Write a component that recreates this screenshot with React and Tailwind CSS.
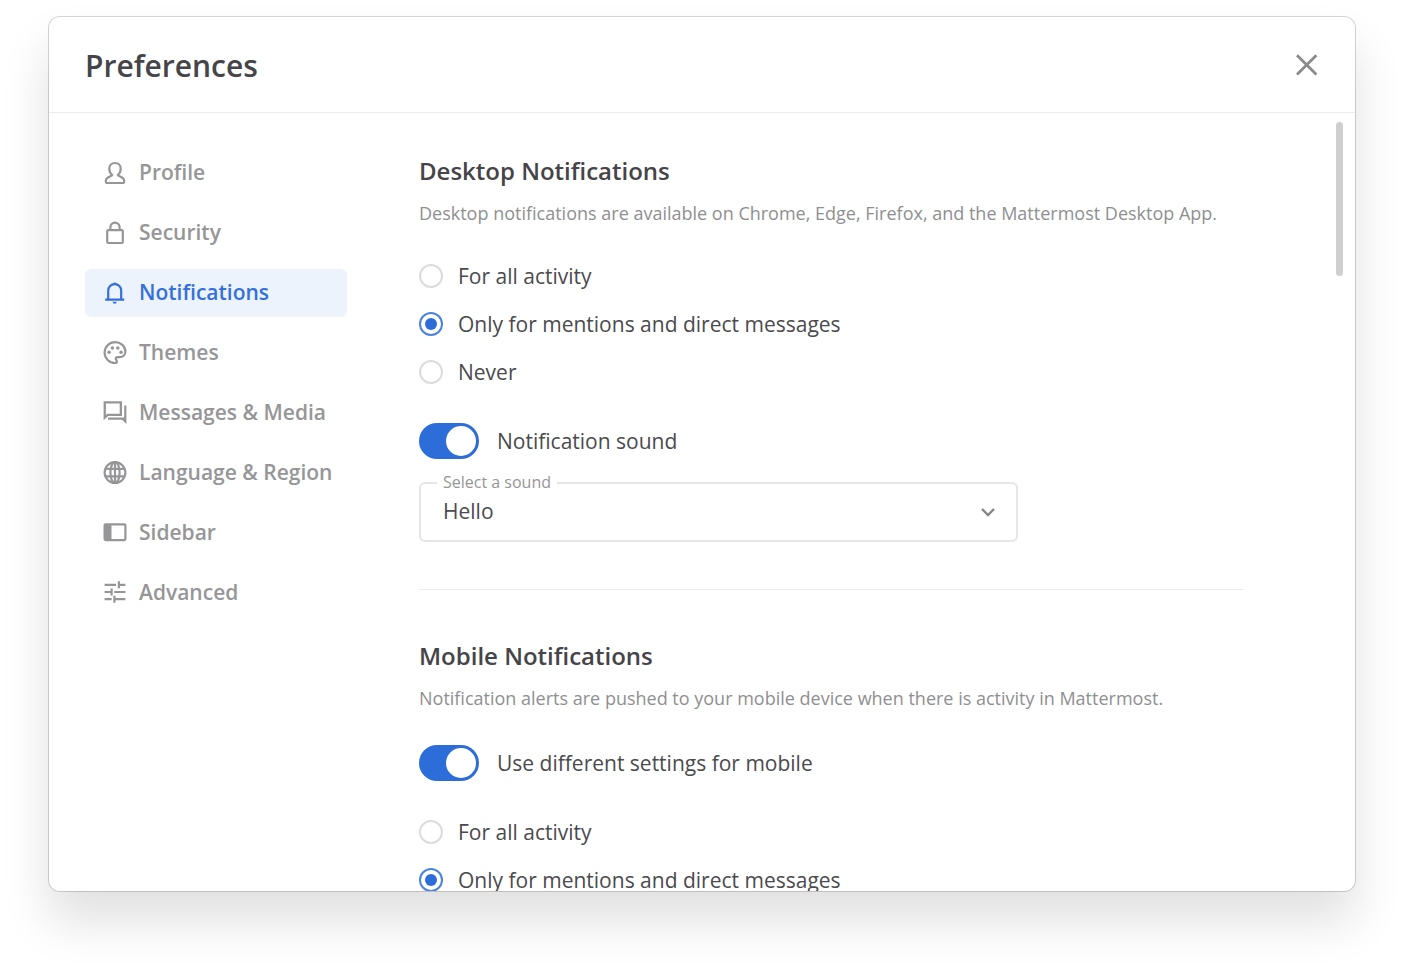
import { useState } from "react";

const stroke = {
  fill: "none",
  stroke: "currentColor",
  strokeWidth: 2.2,
  strokeLinejoin: "round",
};

function Icon({ children }) {
  return (
    <svg viewBox="0 0 24 24" className="size-6 shrink-0" aria-hidden="true">
      {children}
    </svg>
  );
}

const ProfileIcon = () => (
  <Icon>
    <path
      {...stroke}
      d="M12 2C8.700 2 6.300 4.200 6.300 7.700C6.300 10.600 7.600 12.600 9.200 14C8.500 15.600 2.900 15.700 2.900 19.300V20.400C2.900 21.300 3.500 22 4.400 22H19.600C20.500 22 21.100 21.300 21.100 20.400V19.300C21.100 15.700 15.500 15.600 14.800 14C16.400 12.600 17.700 10.600 17.700 7.700C17.700 4.200 15.300 2 12 2Z"
    />
  </Icon>
);

const LockIcon = () => (
  <Icon>
    <rect {...stroke} x="4.200" y="9.200" width="15.600" height="12.800" rx="1" />
    <path {...stroke} d="M7.400 9.200V6.200C7.400 3.600 9.400 1.600 12 1.600S16.600 3.600 16.600 6.200V9.200" />
  </Icon>
);

const BellIcon = () => (
  <Icon>
    <path {...stroke} d="M2.200 18.600H21.200M5.200 18.600V9.800C5.200 6 8 3.200 11.700 3.200S18.200 6 18.200 9.800V18.600" />
    <path fill="currentColor" d="M9.900 2.900a1.900 1.900 0 0 1 3.600 0zM9.600 20.700h4.200a2.100 2.100 0 0 1-4.200 0z" />
  </Icon>
);

const PaletteIcon = () => (
  <Icon>
    <path
      {...stroke}
      d="M12 22C6.200 22 1.600 17.300 1.600 11.600S6.200 1.200 12 1.200S22.400 5.300 22.400 10.600C22.400 13.900 19.700 16.100 16.700 16.100H14.700C13.500 16.100 12.800 16.900 12.800 17.800C12.800 18.900 13.900 19.200 13.900 20.500C13.900 21.400 13.100 22 12 22Z"
    />
    <g fill="currentColor">
      <circle cx="6.100" cy="11.300" r="1.800" />
      <circle cx="9.400" cy="7" r="1.800" />
      <circle cx="14.800" cy="7" r="1.800" />
      <circle cx="18.100" cy="11.300" r="1.800" />
    </g>
  </Icon>
);

const MessagesIcon = () => (
  <Icon>
    <path
      fill="currentColor"
      fillRule="evenodd"
      d="M.600 .300H19V14.900H5.200L.600 19.200ZM2.900 2.600V14L4.300 12.700H16.700V2.600Z"
    />
    <path fill="currentColor" d="M21.200 4.500H23.400V23L19 18.800H5V16.600H21.200Z" />
  </Icon>
);

const GlobeIcon = () => (
  <Icon>
    <g {...stroke}>
      <circle cx="12" cy="11.600" r="10.400" />
      <ellipse cx="12" cy="11.600" rx="4.600" ry="10.400" />
      <path d="M2.300 7.900H21.700M2.300 15.300H21.700M12 1.200V22" />
    </g>
  </Icon>
);

const SidebarIcon = () => (
  <Icon>
    <rect {...stroke} x="1.600" y="3.300" width="20.800" height="15.800" rx="1" />
    <path fill="currentColor" d="M1.600 3.300H8.500V19.100H1.600Z" />
  </Icon>
);

const TuneIcon = () => (
  <Icon>
    <path
      {...stroke}
      strokeLinejoin="miter"
      d="M1.600 3.800H13M15.900 .300V7.300M15.900 3.800H22.400M1.600 11H8.600M8.600 7.500V14.500M11.200 11H22.400M1.600 18.200H8.600M11.400 14.700V21.700M11.400 18.200H22.400"
    />
  </Icon>
);

const NAV = [
  ["Profile", ProfileIcon],
  ["Security", LockIcon],
  ["Notifications", BellIcon],
  ["Themes", PaletteIcon],
  ["Messages & Media", MessagesIcon],
  ["Language & Region", GlobeIcon],
  ["Sidebar", SidebarIcon],
  ["Advanced", TuneIcon],
];

const ACTIVITY = ["For all activity", "Only for mentions and direct messages", "Never"];

function RadioGroup({ name, label }) {
  return (
    <div role="radiogroup" aria-label={label} className="flex flex-col items-start gap-6">
      {ACTIVITY.map((option, i) => (
        <label key={option} className="flex cursor-pointer items-center gap-[15px] leading-6">
          <input
            type="radio"
            name={name}
            defaultChecked={i === 1}
            className="grid size-6 shrink-0 appearance-none place-content-center rounded-full border-2 border-[#dcdcdd] before:size-3 before:rounded-full checked:border-[#4a83e2] checked:before:bg-[#2d6dda]"
          />
          {option}
        </label>
      ))}
    </div>
  );
}

function Toggle({ label }) {
  return (
    <label className="flex cursor-pointer items-center gap-[18px] self-start leading-6">
      <input
        type="checkbox"
        role="switch"
        defaultChecked
        className="flex h-9 w-[60px] shrink-0 appearance-none items-center rounded-full bg-[#b8b8b9] px-[3px] before:size-[30px] before:rounded-full before:bg-white checked:justify-end checked:bg-[#2d6dda]"
      />
      {label}
    </label>
  );
}

function SectionHeading({ title, children }) {
  return (
    <>
      <h2 className="text-2xl leading-8 font-semibold text-[#454449]">{title}</h2>
      <p className="mt-3 text-lg leading-7 text-[#8f8f91]">{children}</p>
    </>
  );
}

export default function App() {
  const [active, setActive] = useState("Notifications");

  return (
    <div className="flex h-screen flex-col bg-white px-12 pt-4 pb-[78px] font-['Open_Sans',sans-serif] text-[21px] text-[#4b4a4e]">
      <div
        role="dialog"
        aria-labelledby="dialog-title"
        className="mr-[-2px] flex min-h-0 flex-1 flex-col overflow-hidden rounded-xl border border-black/16 bg-white bg-clip-padding shadow-[0_30px_48px_rgba(0,0,0,0.12)]"
      >
        <header className="flex h-24 shrink-0 items-center justify-between border-b border-[#ececec] px-9">
          <h1 id="dialog-title" className="pt-0.5 text-3xl font-semibold text-[#454449]">
            Preferences
          </h1>
          <button type="button" aria-label="Close" className="text-[#8b8b8d]">
            <svg viewBox="0 0 24 24" className="size-6" aria-hidden="true">
              <path d="M2 2.200L21.400 21.600M21.400 2.200L2 21.600" fill="none" stroke="currentColor" strokeWidth="2.800" />
            </svg>
          </button>
        </header>

        <div className="flex min-h-0 flex-1">
          <nav aria-label="Preferences" className="flex w-[298px] shrink-0 flex-col gap-3 pt-9 pl-9">
            {NAV.map(([name, NavIcon]) => (
              <button
                key={name}
                type="button"
                onClick={() => setActive(name)}
                aria-current={active === name ? "page" : undefined}
                className={`flex h-12 shrink-0 items-center gap-3 rounded-md pl-[18px] font-semibold whitespace-nowrap ${
                  active === name ? "bg-[#ecf3fc] text-[#3470db]" : "text-[#969698]"
                }`}
              >
                <NavIcon />
                {name}
              </button>
            ))}
          </nav>

          <main className="min-w-0 flex-1 overflow-y-auto pr-[92px] pl-[72px] [scrollbar-width:none]">
            <section className="flex flex-col border-b border-[#ececec] pt-[42px] pb-[47px]">
              <SectionHeading title="Desktop Notifications">
                Desktop notifications are available on Chrome, Edge, Firefox, and the Mattermost Desktop App.
              </SectionHeading>
              <div className="mt-[37px] mb-[39px]">
                <RadioGroup name="desktop" label="Desktop notifications" />
              </div>
              <Toggle label="Notification sound" />
              <div className="relative mt-[23px] w-full max-w-[599px]">
                <label
                  htmlFor="sound"
                  className="absolute -top-3 left-[18px] bg-white px-1.5 text-base leading-6 text-[#969698]"
                >
                  Select a sound
                </label>
                <select
                  id="sound"
                  className="h-15 w-full appearance-none rounded-md border-2 border-[#e5e5e6] bg-white px-[22px]"
                >
                  <option>Hello</option>
                  <option>Bing</option>
                  <option>Ripple</option>
                </select>
                <svg
                  viewBox="0 0 16 16"
                  className="pointer-events-none absolute top-[22px] right-[22px] size-4 text-[#858587]"
                  aria-hidden="true"
                >
                  <path d="M2 5L8 11L14 5" fill="none" stroke="currentColor" strokeWidth="2.400" />
                </svg>
              </div>
            </section>

            <section className="flex flex-col pt-[50px] pb-12">
              <SectionHeading title="Mobile Notifications">
                Notification alerts are pushed to your mobile device when there is activity in Mattermost.
              </SectionHeading>
              <div className="mt-[33px] mb-[39px]">
                <Toggle label="Use different settings for mobile" />
              </div>
              <RadioGroup name="mobile" label="Mobile notifications" />
            </section>
          </main>

          <div className="w-[19px] shrink-0 pt-[9px]" aria-hidden="true">
            <div className="h-1/5 w-[7px] rounded-full bg-[#cfcfd0]" />
          </div>
        </div>
      </div>
    </div>
  );
}
